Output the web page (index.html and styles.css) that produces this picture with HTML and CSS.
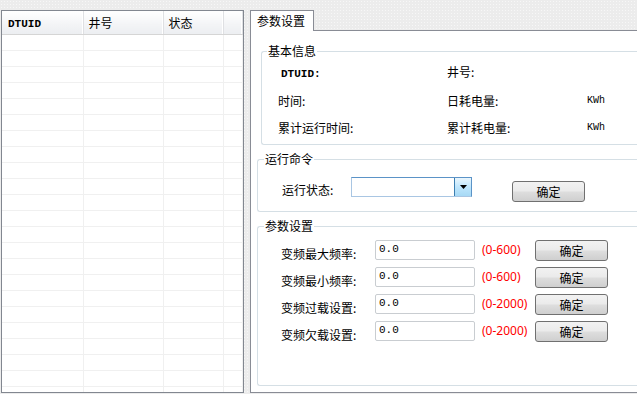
FILE: index.html
```html
<!DOCTYPE html>
<html lang="zh-CN">

<head>
    <meta charset="UTF-8">
    <title>参数设置</title>
    <link rel="stylesheet" href="styles.css">
</head>

<body>
    <div class="window">
        <div class="list-panel">
            <table class="device-table">
                <colgroup>
                    <col class="col-id">
                    <col class="col-well">
                    <col class="col-state">
                    <col>
                </colgroup>
                <thead>
                    <tr>
                        <th><span class="mono">DTUID</span></th>
                        <th>井号</th>
                        <th>状态</th>
                        <th></th>
                    </tr>
                </thead>
                <tbody>
                    <tr><td></td><td></td><td></td><td></td></tr>
                    <tr><td></td><td></td><td></td><td></td></tr>
                    <tr><td></td><td></td><td></td><td></td></tr>
                    <tr><td></td><td></td><td></td><td></td></tr>
                    <tr><td></td><td></td><td></td><td></td></tr>
                    <tr><td></td><td></td><td></td><td></td></tr>
                    <tr><td></td><td></td><td></td><td></td></tr>
                    <tr><td></td><td></td><td></td><td></td></tr>
                    <tr><td></td><td></td><td></td><td></td></tr>
                    <tr><td></td><td></td><td></td><td></td></tr>
                    <tr><td></td><td></td><td></td><td></td></tr>
                    <tr><td></td><td></td><td></td><td></td></tr>
                    <tr><td></td><td></td><td></td><td></td></tr>
                    <tr><td></td><td></td><td></td><td></td></tr>
                    <tr><td></td><td></td><td></td><td></td></tr>
                    <tr><td></td><td></td><td></td><td></td></tr>
                    <tr><td></td><td></td><td></td><td></td></tr>
                    <tr><td></td><td></td><td></td><td></td></tr>
                    <tr><td></td><td></td><td></td><td></td></tr>
                    <tr><td></td><td></td><td></td><td></td></tr>
                    <tr><td></td><td></td><td></td><td></td></tr>
                    <tr><td></td><td></td><td></td><td></td></tr>
                    <tr><td></td><td></td><td></td><td></td></tr>
                </tbody>
            </table>
        </div>

        <div class="settings">
            <div class="tabs">
                <div class="tab active">参数设置</div>
            </div>
            <div class="tab-pane">
                <fieldset class="group group-info">
                    <legend>基本信息</legend>
                    <div class="info-grid">
                        <div class="info-label"><span class="mono">DTUID:</span></div>
                        <div>井号:</div>
                        <div></div>
                        <div>时间:</div>
                        <div>日耗电量:</div>
                        <div class="mono unit">KWh</div>
                        <div>累计运行时间:</div>
                        <div>累计耗电量:</div>
                        <div class="mono unit">KWh</div>
                    </div>
                </fieldset>

                <fieldset class="group group-run">
                    <legend>运行命令</legend>
                    <div class="run-row">
                        <label class="run-label">运行状态:</label>
                        <div class="combo">
                            <span class="combo-text"></span>
                            <span class="combo-arrow">
                                <svg width="7" height="4" viewBox="0 0 7 4"><path d="M0 0h7L3.5 4z" fill="#000"/></svg>
                            </span>
                        </div>
                        <button class="btn run-btn">确定</button>
                    </div>
                </fieldset>

                <fieldset class="group group-params">
                    <legend>参数设置</legend>
                    <div class="param-grid">
                        <label class="param-label">变频最大频率:</label>
                        <input class="param-input" type="text" value="0.0">
                        <span class="param-range">(0-600)</span>
                        <button class="btn">确定</button>

                        <label class="param-label">变频最小频率:</label>
                        <input class="param-input" type="text" value="0.0">
                        <span class="param-range">(0-600)</span>
                        <button class="btn">确定</button>

                        <label class="param-label">变频过载设置:</label>
                        <input class="param-input" type="text" value="0.0">
                        <span class="param-range">(0-2000)</span>
                        <button class="btn">确定</button>

                        <label class="param-label">变频欠载设置:</label>
                        <input class="param-input" type="text" value="0.0">
                        <span class="param-range">(0-2000)</span>
                        <button class="btn">确定</button>
                    </div>
                </fieldset>
            </div>
        </div>
    </div>
</body>

</html>
```

FILE: styles.css
```css
html, body {
    margin: 0;
    padding: 0;
    font-family: "Noto Sans CJK SC", "Noto Sans", sans-serif;
    font-size: 12px;
    line-height: 16px;
    color: #000;
    background-color: #ececec;
    background-image: radial-gradient(circle, #f7f7f7 0.8px, transparent 1px);
    background-size: 3px 3px;
    overflow: hidden;
}

.mono {
    font-family: "Liberation Mono", monospace;
    font-size: 11px;
    font-weight: bold;
}

.window {
    display: flex;
    gap: 6px;
    width: 637px;
    height: 394px;
    padding: 10px 0 0 1px;
    box-sizing: border-box;
}

/* left device list */
.list-panel {
    flex: none;
    width: 243px;
    height: 383px;
    box-sizing: border-box;
    border: 1px solid #828790;
    background: #fff;
    overflow: hidden;
}

.device-table {
    width: 100%;
    table-layout: fixed;
    border-collapse: collapse;
}

.col-id { width: 81px; }
.col-well { width: 80px; }
.col-state { width: 60px; }

.device-table th {
    height: 23px;
    padding: 0 5px;
    text-align: left;
    font-weight: normal;
    background: linear-gradient(#ffffff, #f3f4f6 60%, #eceef1);
    border-right: 1px solid #dfe0e3;
    border-bottom: 1px solid #d5d5d5;
    box-shadow: inset -1px 0 0 #ffffff;
}

.device-table th .mono {
    padding-left: 1px;
}

.device-table td {
    height: 15px;
    padding: 0;
    border-right: 1px solid #f0f0f0;
    border-bottom: 1px solid #f0f0f0;
}

/* right settings, cut off by the window edge */
.settings {
    flex: 1;
    min-width: 0;
    height: 383px;
    display: flex;
    flex-direction: column;
}

.tabs {
    display: flex;
    height: 20px;
}

.tab {
    position: relative;
    z-index: 1;
    width: 64px;
    height: 21px;
    box-sizing: border-box;
    padding: 2px 0 0 6px;
    border: 1px solid #898c95;
    border-bottom: none;
    background: #fff;
}

.tab-pane {
    flex: 1;
    display: flex;
    flex-direction: column;
    border: 1px solid #898c95;
    border-right: none;
    background: #fff;
}

.group {
    margin: 6px 0 0 6px;
    padding: 0;
    border: 1px solid #d5dfe5;
    border-right: none;
    border-radius: 3px 0 0 3px;
    min-width: 0;
}

.group legend {
    margin-left: 6px;
    padding: 0 1px;
    line-height: 16px;
}

.group-info {
    margin: 12px 0 0 10px;
}

.group-info legend {
    margin-left: 5px;
}

.info-grid {
    display: grid;
    grid-template-columns: 169px 140px auto;
    row-gap: 11px;
    padding: 5px 0 8px 16px;
}

.info-label .mono {
    padding-left: 3px;
}

.unit {
    font-weight: normal;
    font-size: 10px;
}

/* run command */
.run-row {
    display: flex;
    align-items: flex-start;
    padding: 10px 0 9px 24px;
}

.run-label {
    width: 69px;
    margin-top: 5px;
}

.combo {
    display: flex;
    width: 121px;
    height: 20px;
    box-sizing: border-box;
    border: 1px solid #5b93c7;
    border-left-color: #a9c6e3;
    border-bottom-color: #a9c6e3;
    background: #fff;
}

.combo-text {
    flex: 1;
}

.combo-arrow {
    display: flex;
    align-items: center;
    justify-content: center;
    width: 16px;
    border-left: 1px solid #3c7fb1;
    background: linear-gradient(#eaf6fd, #bee6fd 50%, #a7d9f5);
}

.btn {
    width: 73px;
    height: 21px;
    padding: 0;
    font-family: "Noto Sans CJK SC", "Noto Sans", sans-serif;
    font-size: 12px;
    line-height: 16px;
    color: #000;
    border: 1px solid #707070;
    border-radius: 3px;
    background: linear-gradient(#f2f2f2, #ebebeb 45%, #dddddd 55%, #cfcfcf);
}

.run-btn {
    margin: 4px 0 0 40px;
}

/* parameter rows */
.group-params {
    flex: 1;
    margin-bottom: 6px;
}

.param-grid {
    display: grid;
    grid-template-columns: 94px 100px 60px 73px;
    grid-auto-rows: 20px;
    row-gap: 7px;
    align-items: start;
    padding: 6px 0 0 23px;
}

.param-label {
    margin-top: 6px;
    white-space: nowrap;
}

.param-input {
    width: 100px;
    height: 20px;
    box-sizing: border-box;
    margin: 0;
    padding: 0 3px 3px;
    border: 1px solid #c9cdd1;
    border-radius: 2px;
    font-family: "Liberation Mono", monospace;
    font-size: 11px;
    color: #000;
}

.param-range {
    margin-top: 2px;
    padding-left: 7px;
    font-family: "Noto Sans", sans-serif;
    font-size: 12px;
    color: #ff0000;
}
```
